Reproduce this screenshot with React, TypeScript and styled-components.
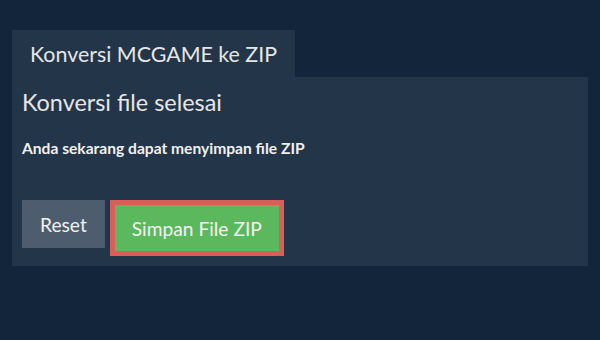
import styled, { createGlobalStyle } from "styled-components";

const GlobalStyle = createGlobalStyle`
  html, body {
    margin: 0;
    padding: 0;
    background: #13253a;
  }
  body {
    font-family: Lato, "Open Sans", sans-serif;
    color: #ececec;
  }
`;

const App = () => {
  return (
    <>
      <GlobalStyle />
      <Page>
        <Tab>Konversi MCGAME ke ZIP</Tab>
        <Panel>
          <Title>Konversi file selesai</Title>
          <Note>Anda sekarang dapat menyimpan file ZIP</Note>
          <Actions>
            <ResetButton>Reset</ResetButton>
            <SaveButton>Simpan File ZIP</SaveButton>
          </Actions>
        </Panel>
      </Page>
    </>
  );
};
export default App;

const Page = styled.div`
  width: 600px;
  height: 340px;
  box-sizing: border-box;
  padding: 30px 12px 0;
  display: flex;
  flex-direction: column;
  align-items: flex-start;
`;
const Tab = styled.div`
  height: 47px;
  padding: 0 18px;
  display: flex;
  align-items: center;
  background: #233549;
  font-size: 21.4px;
  color: #e6e6e6;
`;
const Panel = styled.div`
  align-self: stretch;
  background: #233549;
  padding: 11px 10px 10px;
  display: flex;
  flex-direction: column;
`;
const Title = styled.h2`
  margin: 0;
  font-weight: 400;
  font-size: 23.4px;
  line-height: 28px;
  color: #e6e6e6;
`;
const Note = styled.p`
  margin: 22px 0 0;
  font-weight: 700;
  font-size: 15.6px;
  line-height: 20px;
  color: #f0f0f0;
`;
const Actions = styled.div`
  display: flex;
  align-items: flex-start;
  gap: 5px;
  margin-top: 42px;
`;
const ResetButton = styled.button`
  height: 48px;
  padding: 0 18px;
  border: none;
  background: #4d5d6e;
  color: #f2f2f2;
  font-family: inherit;
  font-size: 19.2px;
`;
const SaveButton = styled.button`
  box-sizing: content-box;
  height: 46px;
  padding: 0 17px;
  border: 5px solid #da5d58;
  background: #5cb85c;
  color: #f4f4f4;
  font-family: inherit;
  font-size: 19.2px;
`;
